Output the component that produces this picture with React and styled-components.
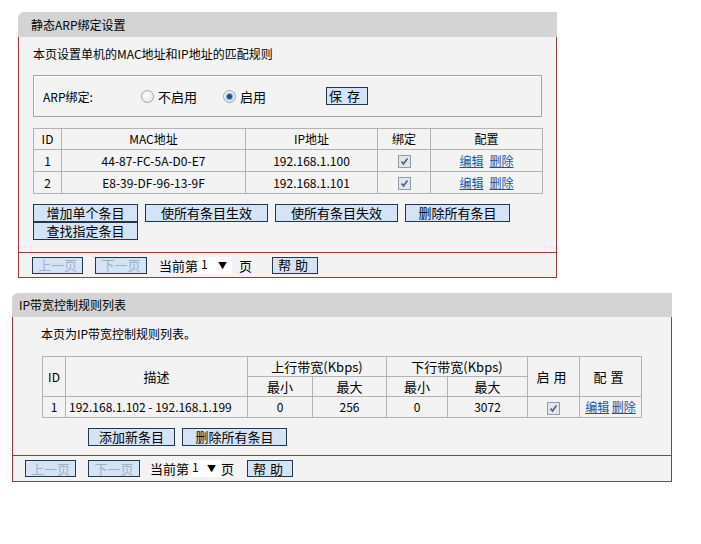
import React from 'react';
import styled, { createGlobalStyle } from 'styled-components';

const GlobalStyle = createGlobalStyle`
    body {
        margin: 0;
        background: #fff;
        font-family: "Noto Sans CJK SC", "Noto Sans", sans-serif;
        font-size: 12px;
        color: #000;
    }
`;

const RED = '#9c3a3a';

const Page = styled.div`
    display: flex;
    flex-direction: column;
    padding-top: 12px;
`;

const Panel = styled.section`
    width: ${p => p.$width}px;
    margin-left: ${p => p.$left}px;
    margin-top: ${p => p.$top || 0}px;
`;

const TitleBar = styled.div`
    height: ${p => p.$h}px;
    line-height: ${p => p.$h}px;
    background: #d4d4d4;
    border-top-left-radius: 6px;
    padding-left: ${p => p.$pad}px;
    font-size: 12px;
`;

const Body = styled.div`
    background: #f3f3f3;
    border: 1px solid ${RED};
    border-top: none;
`;

const Content = styled.div`
    padding: ${p => p.$pad};
    display: flex;
    flex-direction: column;
    align-items: flex-start;
`;

const Desc = styled.div`
    height: 16px;
    line-height: 16px;
    margin-left: ${p => p.$indent || 0}px;
`;

const FieldBox = styled.div`
    margin-top: 13px;
    width: 509px;
    height: 42px;
    box-sizing: border-box;
    border: 1px solid #a4a4a4;
    box-shadow: inset 1px 1px #fff;
    display: flex;
    align-items: center;
    padding-left: 9px;
`;

const FieldLabel = styled.span`
    width: 98px;
`;

const RadioGroup = styled.label`
    display: flex;
    align-items: center;
    gap: 4px;
    margin-right: ${p => p.$gap}px;
    font-size: 13px;
`;

const RadioDot = styled.span`
    width: 11px;
    height: 11px;
    border-radius: 50%;
    border: 1px solid #9ea4ab;
    background: radial-gradient(circle at 40% 35%, #ffffff, #dcdfe3);
    display: flex;
    align-items: center;
    justify-content: center;
    &::after {
        content: '';
        width: 5px;
        height: 5px;
        border-radius: 50%;
        background: ${p => (p.$on ? '#1d4f8f' : 'transparent')};
        box-shadow: ${p => (p.$on ? '0 0 1px 1px #6f9fd6' : 'none')};
    }
`;

const Btn = styled.button`
    width: ${p => p.$w}px;
    height: ${p => p.$h || 18}px;
    padding: 0;
    box-sizing: border-box;
    border: 1px solid #22364c;
    background: #d4e4f6;
    font-family: inherit;
    font-size: 13px;
    line-height: 14px;
    color: ${p => (p.disabled ? '#9fb0c2' : '#000')};
    letter-spacing: ${p => p.$space || 0}px;
    cursor: pointer;
`;

const Table = styled.table`
    margin-top: ${p => p.$top}px;
    margin-left: ${p => p.$indent || 0}px;
    width: ${p => p.$width}px;
    border-collapse: collapse;
    table-layout: fixed;
`;

const Cell = styled.td`
    border: 1px solid #b3b3b3;
    height: ${p => p.$h || 20}px;
    padding: 0 ${p => (p.$left ? 3 : 0)}px;
    text-align: ${p => (p.$left ? 'left' : 'center')};
    vertical-align: middle;
    white-space: nowrap;
    font-size: ${p => (p.$big ? 13 : 12)}px;
    line-height: 14px;
    letter-spacing: ${p => p.$space || 0}px;
`;

const Link = styled.a`
    color: #0c5aa6;
    text-decoration: underline;
    margin: 0 3px;
`;

const ButtonRows = styled.div`
    display: flex;
    flex-wrap: wrap;
    column-gap: 7px;
    width: ${p => p.$width}px;
    margin-top: ${p => p.$top}px;
    margin-left: ${p => p.$indent || 0}px;
`;

const Footer = styled.div`
    border-top: 1px solid ${RED};
    height: ${p => p.$h}px;
    display: flex;
    align-items: center;
    padding-left: ${p => p.$pad}px;
`;

const FootText = styled.span`
    font-size: 13px;
    margin-left: ${p => p.$ml || 0}px;
`;

const PageSelect = styled.div`
    width: ${p => p.$w}px;
    height: 17px;
    background: #fff;
    display: flex;
    align-items: center;
    justify-content: space-between;
    padding: 0 5px 0 3px;
    box-sizing: border-box;
    font-size: 12px;
    & span:first-child {
        margin-top: -4px;
    }
`;

const Spacer = styled.span`
    width: ${p => p.$w}px;
    flex: none;
`;

const Check = () => (
    <svg width="13" height="13" viewBox="0 0 13 13" style={{ verticalAlign: 'middle' }}>
        <rect x="0.5" y="0.5" width="12" height="12" fill="#e3e6ea" stroke="#8f9cae" />
        <path d="M3.5 6.5 L5.5 9 L9.5 3.5" fill="none" stroke="#4d5f80" strokeWidth="1.6" />
    </svg>
);

const Pager = ({ pad, h, gaps, selW }) => (
    <Footer $pad={pad} $h={h}>
        <Btn $w={51} $h={17} disabled>上一页</Btn>
        <Spacer $w={gaps[0]} />
        <Btn $w={52} $h={17} disabled>下一页</Btn>
        <FootText $ml={gaps[1]}>当前第</FootText>
        <PageSelect $w={selW}>
            <span>1</span>
            <span style={{ fontSize: 9 }}>▼</span>
        </PageSelect>
        <FootText $ml={gaps[2]}>页</FootText>
        <Spacer $w={gaps[3]} />
        <Btn $w={46} $h={17} $space={4}>帮助</Btn>
    </Footer>
);

const arpRows = [
    { id: 1, mac: '44-87-FC-5A-D0-E7', ip: '192.168.1.100' },
    { id: 2, mac: 'E8-39-DF-96-13-9F', ip: '192.168.1.101' },
];

export default function App() {
    return (
        <Page>
            <GlobalStyle />
            <Panel $left={18} $width={539}>
                <TitleBar $h={25} $pad={13}>静态ARP绑定设置</TitleBar>
                <Body>
                    <Content $pad="9px 14px 12px 14px">
                        <Desc>本页设置单机的MAC地址和IP地址的匹配规则</Desc>
                        <FieldBox>
                            <FieldLabel>ARP绑定:</FieldLabel>
                            <RadioGroup $gap={26}>
                                <RadioDot />
                                不启用
                            </RadioGroup>
                            <RadioGroup $gap={60}>
                                <RadioDot $on />
                                启用
                            </RadioGroup>
                            <Btn $w={42} $h={18} $space={5}>保存</Btn>
                        </FieldBox>
                        <Table $top={11} $width={509}>
                            <colgroup>
                                <col style={{ width: 28 }} />
                                <col style={{ width: 184 }} />
                                <col style={{ width: 132 }} />
                                <col style={{ width: 53 }} />
                                <col style={{ width: 112 }} />
                            </colgroup>
                            <tbody>
                                <tr>
                                    <Cell $h={20}>ID</Cell>
                                    <Cell $h={20}>MAC地址</Cell>
                                    <Cell $h={20}>IP地址</Cell>
                                    <Cell $h={20}>绑定</Cell>
                                    <Cell $h={20}>配置</Cell>
                                </tr>
                                {arpRows.map(r => (
                                    <tr key={r.id}>
                                        <Cell $h={21}>{r.id}</Cell>
                                        <Cell $h={21}>{r.mac}</Cell>
                                        <Cell $h={21}>{r.ip}</Cell>
                                        <Cell $h={21}><Check /></Cell>
                                        <Cell $h={21}>
                                            <Link>编辑</Link>
                                            <Link>删除</Link>
                                        </Cell>
                                    </tr>
                                ))}
                            </tbody>
                        </Table>
                        <ButtonRows $width={509} $top={10}>
                            <Btn $w={105}>增加单个条目</Btn>
                            <Btn $w={123}>使所有条目生效</Btn>
                            <Btn $w={123}>使所有条目失效</Btn>
                            <Btn $w={105}>删除所有条目</Btn>
                            <Btn $w={105}>查找指定条目</Btn>
                        </ButtonRows>
                    </Content>
                    <Pager pad={13} h={24} gaps={[12, 12, 7, 20]} selW={34} />
                </Body>
            </Panel>

            <Panel $left={12} $width={660} $top={15}>
                <TitleBar $h={24} $pad={7}>IP带宽控制规则列表</TitleBar>
                <Body>
                    <Content $pad="9px 14px 9px 14px">
                        <Desc $indent={14}>本页为IP带宽控制规则列表。</Desc>
                        <Table $top={14} $width={599} $indent={15}>
                            <colgroup>
                                <col style={{ width: 23 }} />
                                <col style={{ width: 182 }} />
                                <col style={{ width: 65 }} />
                                <col style={{ width: 74 }} />
                                <col style={{ width: 61 }} />
                                <col style={{ width: 80 }} />
                                <col style={{ width: 52 }} />
                                <col style={{ width: 62 }} />
                            </colgroup>
                            <tbody>
                                <tr>
                                    <Cell $h={19} rowSpan={2}>ID</Cell>
                                    <Cell $h={19} rowSpan={2} $big>描述</Cell>
                                    <Cell $h={19} colSpan={2} $big>上行带宽(Kbps)</Cell>
                                    <Cell $h={19} colSpan={2} $big>下行带宽(Kbps)</Cell>
                                    <Cell $h={19} rowSpan={2} $big $space={4}>启用</Cell>
                                    <Cell $h={19} rowSpan={2} $big $space={4}>配置</Cell>
                                </tr>
                                <tr>
                                    <Cell $h={19} $big>最小</Cell>
                                    <Cell $h={19} $big>最大</Cell>
                                    <Cell $h={19} $big>最小</Cell>
                                    <Cell $h={19} $big>最大</Cell>
                                </tr>
                                <tr>
                                    <Cell $h={20}>1</Cell>
                                    <Cell $h={20} $left>192.168.1.102 - 192.168.1.199</Cell>
                                    <Cell $h={20}>0</Cell>
                                    <Cell $h={20}>256</Cell>
                                    <Cell $h={20}>0</Cell>
                                    <Cell $h={20}>3072</Cell>
                                    <Cell $h={20}><Check /></Cell>
                                    <Cell $h={20}>
                                        <Link style={{ margin: 0 }}>编辑</Link>{' '}
                                        <Link style={{ margin: 0 }}>删除</Link>
                                    </Cell>
                                </tr>
                            </tbody>
                        </Table>
                        <ButtonRows $width={300} $top={10} $indent={61}>
                            <Btn $w={87}>添加新条目</Btn>
                            <Btn $w={105}>删除所有条目</Btn>
                        </ButtonRows>
                    </Content>
                    <Pager pad={12} h={25} gaps={[12, 10, 0, 13]} selW={32} />
                </Body>
            </Panel>
        </Page>
    );
}
